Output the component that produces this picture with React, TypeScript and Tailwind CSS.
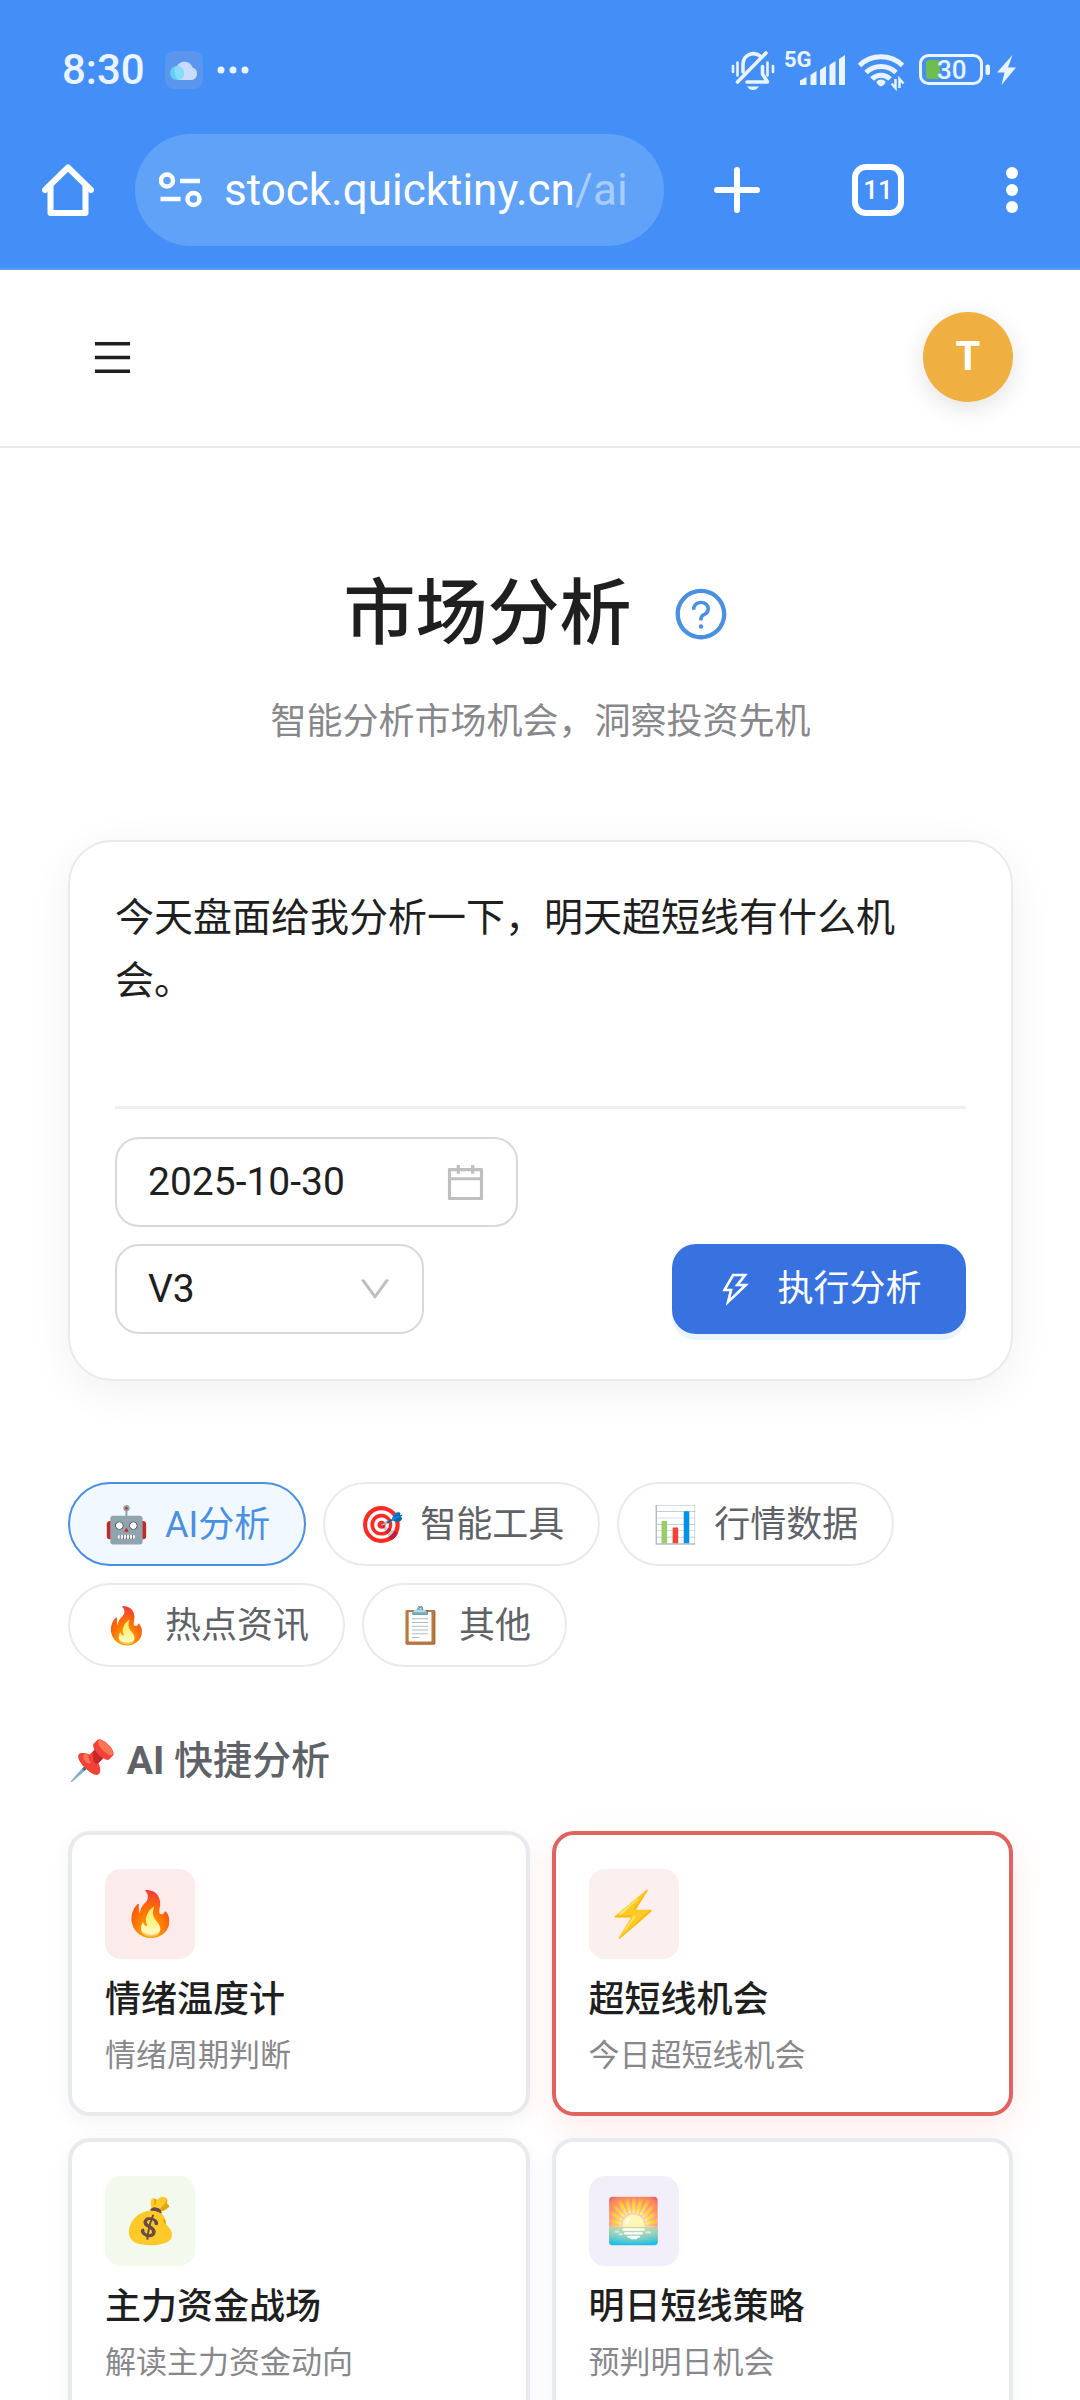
import React, { useState } from 'react';
import clsx from 'clsx';
import {
  AiOutlineCalendar,
  AiOutlineDown,
  AiOutlineMenu,
  AiOutlineQuestionCircle,
  AiOutlineThunderbolt,
} from 'react-icons/ai';

interface Category {
  id: string;
  emoji: string;
  label: string;
}

interface QuickCard {
  id: string;
  emoji: string;
  iconBg: string;
  title: string;
  description: string;
}

const CATEGORIES: Category[] = [
  { id: 'ai', emoji: '🤖', label: 'AI分析' },
  { id: 'tools', emoji: '🎯', label: '智能工具' },
  { id: 'market', emoji: '📊', label: '行情数据' },
  { id: 'news', emoji: '🔥', label: '热点资讯' },
  { id: 'other', emoji: '📋', label: '其他' },
];

const QUICK_CARDS: QuickCard[] = [
  { id: 'mood', emoji: '🔥', iconBg: 'bg-[#fbeceb]', title: '情绪温度计', description: '情绪周期判断' },
  { id: 'short', emoji: '⚡', iconBg: 'bg-[#fbf0ef]', title: '超短线机会', description: '今日超短线机会' },
  { id: 'funds', emoji: '💰', iconBg: 'bg-[#f3f9ed]', title: '主力资金战场', description: '解读主力资金动向' },
  { id: 'tomorrow', emoji: '🌅', iconBg: 'bg-[#f2eefa]', title: '明日短线策略', description: '预判明日机会' },
];

const CloudIcon = () => (
  <svg width="38" height="38" viewBox="0 0 38 38" aria-hidden="true">
    <rect width="38" height="38" rx="9" fill="#5a96ee" />
    <path d="M13 29a7 7 0 0 1-2-11 8.500 8.500 0 0 1 16.500-1.500A6.500 6.500 0 0 1 27 29Z" fill="#c9dcfb" />
    <circle cx="12" cy="22" r="7" fill="#63cdf4" />
    <path d="M10 15.500a7 7 0 0 1 6 12.500q-2 1-3 1-5-5-3-13.500Z" fill="#86dcfb" />
  </svg>
);

const MutedBellIcon = () => (
  <svg width="46" height="44" viewBox="0 0 46 44" fill="none" stroke="#e9f4ff" strokeLinecap="round" aria-hidden="true">
    <path d="M3 18v6M7.500 14.500v13M37.500 14.500v13M43 18v6" strokeWidth="2.600" />
    <path d="M13 24V16a10.500 10.500 0 0 1 17-8" strokeWidth="3.600" />
    <path d="M7.500 34 36 5" strokeWidth="3.600" />
    <path d="M17 34H37.500L32.500 26V18.500" strokeWidth="3.600" strokeLinejoin="round" />
    <path d="M17 38.500h12q-2.500 3.500-6 3.500t-6-3.500Z" fill="#e9f4ff" stroke="none" />
  </svg>
);

const SignalIcon = () => (
  <svg width="64" height="44" viewBox="0 0 64 44" fill="#e9f4ff" aria-label="5G">
    <text x="0" y="19" fontSize="22" fontWeight="700">5G</text>
    <path d="M16 37V32.500L22.500 29V37ZM26.500 37V27L32.500 23V37ZM36 37V22L42 18V37ZM45.500 37V17L51.500 13V37ZM55 37V11L61 7V37Z" />
  </svg>
);

const WifiIcon = () => (
  <svg width="52" height="44" viewBox="0 0 52 44" fill="none" stroke="#e9f4ff" strokeWidth="5" aria-hidden="true">
    <path d="M3.500 17.500a31 31 0 0 1 43 0" />
    <path d="M10 24.500a21.500 21.500 0 0 1 30 0" />
    <path d="M16 31a12.500 12.500 0 0 1 18 0" />
    <path d="M20.500 33.500a6 6 0 0 1 9 0q0 3-4.500 5-4.500-2-4.500-5Z" fill="#e9f4ff" stroke="none" />
    <path d="M39.500 31v9l-4-4.500M43.500 40v-9l4 4.500" strokeWidth="2.500" />
  </svg>
);

const BatteryIcon = () => (
  <svg width="102" height="44" viewBox="0 0 102 44" aria-label="30%">
    <rect x="4.500" y="7.500" width="61" height="28" rx="8" fill="none" stroke="#e9f4ff" strokeWidth="3" />
    <rect x="10" y="12" width="14" height="19" rx="3" fill="#6dbd4f" />
    <rect x="69.500" y="16.500" width="4.500" height="10.500" rx="2" fill="#e9f4ff" />
    <text x="21" y="31" fontSize="26" fontWeight="500" fill="#e9f4ff">30</text>
    <path d="M96.500 7 81 24.500h7.500L85.500 37 100 19.500h-8Z" fill="#e9f4ff" />
  </svg>
);

const StatusBar = () => (
  <div className="flex items-center justify-between pt-12 pr-[62px] pb-[42px] pl-[62px]">
    <div className="flex h-11 items-center">
      <span className="text-[42px] leading-[44px] font-medium text-[#e9f4ff]">8:30</span>
      <span className="ml-5 flex items-center gap-[14px]">
        <CloudIcon />
        <svg width="32" height="8" viewBox="0 0 32 8" fill="#e9f4ff" aria-hidden="true">
          <circle cx="4" cy="4" r="3.500" />
          <circle cx="16" cy="4" r="3.500" />
          <circle cx="28" cy="4" r="3.500" />
        </svg>
      </span>
    </div>
    <div className="flex h-11 items-center gap-2">
      <MutedBellIcon />
      <SignalIcon />
      <WifiIcon />
      <BatteryIcon />
    </div>
  </div>
);

const BrowserBar = () => (
  <div className="flex items-center pr-[62px] pb-[22px] pl-[42px]">
    <button type="button" aria-label="主页">
      <svg width="52" height="52" viewBox="0 0 52 52" fill="none" stroke="#fff" strokeWidth="6" strokeLinejoin="round" strokeLinecap="round">
        <path d="M3 26 26 3.500 49 26" />
        <path d="M8.500 22V49h35V22" />
      </svg>
    </button>
    <button type="button" className="ml-[41px] flex h-28 flex-1 items-center rounded-full bg-[#60a2f8] pl-6 text-left">
      <svg width="43" height="36" viewBox="0 0 43 36" fill="none" stroke="#fff" strokeWidth="4.500" aria-hidden="true">
        <circle cx="8" cy="8.500" r="6" />
        <path d="M21 9h20M1.500 27h20" />
        <circle cx="34.500" cy="27" r="6" />
      </svg>
      <span className="ml-[22px] text-[44px] leading-[56px] text-white">
        stock.quicktiny.cn<span className="text-[#a9cdfb]">/ai</span>
      </span>
    </button>
    <button type="button" aria-label="新标签页" className="ml-[50px]">
      <svg width="46" height="46" viewBox="0 0 46 46" stroke="#fff" strokeWidth="6" strokeLinecap="round">
        <path d="M23 3v40M3 23h40" />
      </svg>
    </button>
    <button
      type="button"
      aria-label="11 个标签页"
      className="ml-[92px] flex size-[52px] items-center justify-center rounded-[14px] border-[6px] border-white text-[26px] leading-none font-medium text-white"
    >
      11
    </button>
    <button type="button" aria-label="更多" className="ml-[102px]">
      <svg width="12" height="48" viewBox="0 0 12 48" fill="#fff">
        <circle cx="6" cy="7" r="6" />
        <circle cx="6" cy="24" r="6" />
        <circle cx="6" cy="41" r="6" />
      </svg>
    </button>
  </div>
);

const SiteHeader = () => (
  <header className="flex items-center justify-between border-b-2 border-[#e8eaed] px-[67px] pt-[42px] pb-11">
    <button type="button" aria-label="菜单" className="ml-[23px] text-[#1f1f1f]">
      <AiOutlineMenu size={45} />
    </button>
    <button
      type="button"
      aria-label="账户"
      className="flex size-[90px] items-center justify-center rounded-full bg-[#efaf41] text-[40px] font-bold text-white shadow-[0_6px_24px_rgba(0,0,0,0.12)]"
    >
      T
    </button>
  </header>
);

const AnalysisForm = () => {
  const [prompt, setPrompt] = useState('今天盘面给我分析一下，明天超短线有什么机会。');
  const [date, setDate] = useState('2025-10-30');
  const [model, setModel] = useState('V3');

  return (
    <form
      className="mt-[89px] rounded-[44px] border-2 border-[#e8eaed] bg-white p-[45px] shadow-[0_10px_44px_rgba(0,0,0,0.06)]"
      onSubmit={(e) => e.preventDefault()}
    >
      <textarea
        aria-label="分析内容"
        value={prompt}
        onChange={(e) => setPrompt(e.target.value)}
        className="block h-[219px] w-full resize-none overflow-hidden text-[39px] leading-[63px] text-[#1f1f1f] outline-none"
      />
      <div className="border-t-[3px] border-[#f0f0f0] pt-7">
        <label className="flex h-[90px] w-[403px] items-center rounded-3xl border-2 border-[#d9d9d9] pr-7 pl-[31px]">
          <input
            type="text"
            aria-label="日期"
            value={date}
            onChange={(e) => setDate(e.target.value)}
            className="w-0 flex-1 text-[39px] leading-[60px] text-[#1f1f1f] outline-none"
          />
          <AiOutlineCalendar size={45} className="text-[#bfbfbf]" />
        </label>
        <div className="mt-[17px] flex items-center justify-between">
          <div className="relative w-[309px]">
            <select
              aria-label="模型"
              value={model}
              onChange={(e) => setModel(e.target.value)}
              className="h-[90px] w-full appearance-none rounded-3xl border-2 border-[#d9d9d9] bg-white pl-[31px] text-[39px] text-[#1f1f1f] outline-none"
            >
              <option>V3</option>
              <option>R1</option>
            </select>
            <AiOutlineDown
              size={38}
              className="pointer-events-none absolute top-1/2 right-[30px] -translate-y-1/2 text-[#bfbfbf]"
            />
          </div>
          <button
            type="submit"
            className="flex h-[90px] w-[294px] items-center justify-center gap-[22px] rounded-3xl bg-[#3872e0] text-[36px] text-white shadow-[0_6px_0_#e9f4ff]"
          >
            <AiOutlineThunderbolt size={39} />
            执行分析
          </button>
        </div>
      </div>
    </form>
  );
};

const QuickAnalysisCard: React.FC<{ card: QuickCard; active: boolean; onClick: () => void }> = ({
  card,
  active,
  onClick,
}) => (
  <button
    type="button"
    onClick={onClick}
    className={clsx(
      'rounded-[22px] border-4 bg-white px-[33px] py-[34px] text-left',
      active
        ? 'border-[#df6460] shadow-[0_10px_32px_rgba(255,77,79,0.12)]'
        : 'border-[#e8eaed] shadow-[0_5px_20px_rgba(0,0,0,0.05)]',
    )}
  >
    <span
      className={clsx('flex size-[90px] items-center justify-center rounded-2xl text-[44px] leading-none', card.iconBg)}
    >
      {card.emoji}
    </span>
    <span className="mt-[14px] block text-[36px] leading-[54px] font-medium text-[#1f1f1f]">{card.title}</span>
    <span className="mt-[6px] block text-[31px] leading-[45px] text-[#88888c]">{card.description}</span>
  </button>
);

export default function App() {
  const [category, setCategory] = useState('ai');
  const [selected, setSelected] = useState('short');

  return (
    <div className="flex h-screen flex-col bg-white font-['Roboto','Noto_Sans_CJK_SC',sans-serif]">
      <div className="border-b-2 border-[#5a9bf3] bg-[#448ef8]">
        <StatusBar />
        <BrowserBar />
      </div>
      <SiteHeader />

      <main className="min-h-0 flex-1 overflow-y-auto pt-[123px] pr-[67px] pl-[68px] [scrollbar-width:none]">
        <div className="flex items-center justify-center gap-10">
          <h1 className="text-[72px] leading-[86px] font-medium text-[#1f1f1f]">市场分析</h1>
          <button type="button" aria-label="帮助" className="mr-2 text-[#4a90e2]">
            <AiOutlineQuestionCircle size={58} />
          </button>
        </div>
        <p className="mt-9 text-center text-[36px] leading-[58px] text-[#88888c]">
          智能分析市场机会，洞察投资先机
        </p>

        <AnalysisForm />

        <div className="mt-[101px] flex flex-wrap gap-[17px]">
          {CATEGORIES.map((item) => (
            <button
              key={item.id}
              type="button"
              onClick={() => setCategory(item.id)}
              className={clsx(
                'flex h-[84px] items-center gap-4 rounded-full border-2 px-[34px] pt-0.5 text-[36px] leading-[54px]',
                item.id === category
                  ? 'border-[#4a90e2] bg-[#f2f8ff] text-[#4a90e2]'
                  : 'border-[#e8eaed] bg-white text-[#5f6368]',
              )}
            >
              <span>{item.emoji}</span>
              {item.label}
            </button>
          ))}
        </div>

        <h2 className="mt-[63px] text-[39px] leading-[62px] font-medium text-[#5f6368]">
          📌 <span className="font-bold">AI</span> 快捷分析
        </h2>

        <div className="mt-[39px] grid grid-cols-2 gap-[22px] pb-16">
          {QUICK_CARDS.map((card) => (
            <QuickAnalysisCard
              key={card.id}
              card={card}
              active={card.id === selected}
              onClick={() => setSelected(card.id)}
            />
          ))}
        </div>
      </main>
    </div>
  );
}
